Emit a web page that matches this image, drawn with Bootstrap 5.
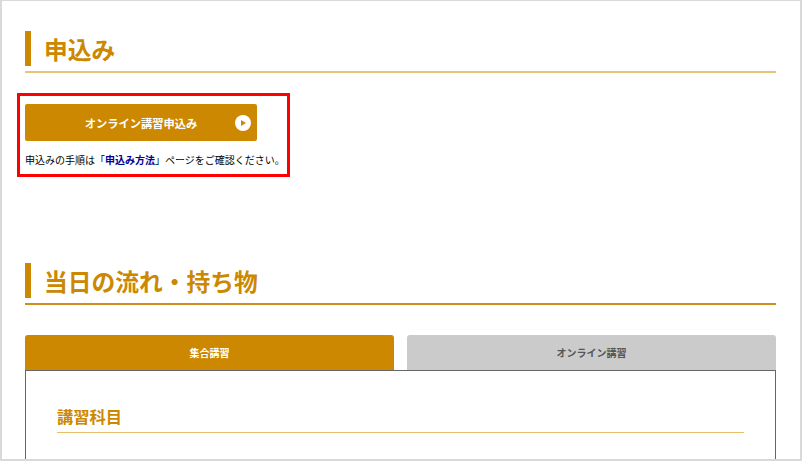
<!DOCTYPE html>
<html lang="ja">
<head>
  <meta charset="UTF-8">
  <title>申込み</title>
  <link rel="stylesheet" href="https://cdn.jsdelivr.net/npm/bootstrap@5.3.0/dist/css/bootstrap.min.css">
  <style>
    html, body { height: 462px; overflow: hidden; background: #fff; }
    body { font-family: "Liberation Sans", "Noto Sans CJK JP", sans-serif; color: #000; }
    .page-frame { height: 461px; overflow: hidden; border: solid #d9d9d9; border-width: 1px 2px 2px 2px; padding: 30px 24px 0 23px; }
    .sec-title { border-bottom: 2px solid #e6c47e; padding-bottom: 5px; margin: 0; }
    .sec-title span { display: block; border-left: 6px solid #cc8800; padding-left: 13px; height: 35px; line-height: 39px; font-size: 23.75px; font-weight: 700; color: #cc8800; }
    .sec-title.dark { border-bottom-color: #cc8f1c; }
    .apply-box { width: 273px; height: 84px; margin: 20px 0 86px -8px; border: 3px solid #f00; padding: 8px 5px 0; }
    .apply-btn { height: 37px; width: 232px; padding-top: 3px; background: #cc8800; color: #fff; font-size: 11.25px; font-weight: 700; border-radius: 2px; position: relative; }
    .apply-btn svg { position: absolute; right: 6px; top: 11px; }
    .apply-note { font-size: 10px; line-height: 14px; margin: 13px 0 0; white-space: nowrap; }
    .apply-note a { color: #000099; text-decoration: none; font-weight: 700; }
    .tab-row { margin-top: 30px; gap: 13px; }
    .tab-item { flex: 1 1 0; height: 35px; padding-top: 1px; font-size: 10px; font-weight: 700; border-radius: 3px 3px 0 0; }
    .tab-on { background: #cc8800; color: #fff; }
    .tab-off { background: #cbcbcb; color: #555; }
    .tab-body { border: 1px solid #666; border-bottom: 0; padding: 36px 31px 0; height: 120px; }
    .sub-title { font-size: 16.25px; font-weight: 700; color: #cc8800; border-bottom: 1px solid #e8bf6a; margin: 0; padding-bottom: 5px; line-height: 20px; }
  </style>
</head>
<body>
<div class="page-frame">
  <h2 class="sec-title"><span>申込み</span></h2>

  <div class="apply-box">
    <a href="#" class="apply-btn d-flex align-items-center justify-content-center text-decoration-none">
      オンライン講習申込み
      <svg width="16" height="16" viewBox="0 0 16 16"><circle cx="8" cy="8" r="8" fill="#fff"/><path d="M6 5 11 8 6 11Z" fill="#cc8800"/></svg>
    </a>
    <p class="apply-note">申込みの手順は「<a href="#">申込み方法</a>」ページをご確認ください。</p>
  </div>

  <h2 class="sec-title dark"><span>当日の流れ・持ち物</span></h2>

  <div class="tab-row d-flex">
    <div class="tab-item tab-on d-flex align-items-center justify-content-center">集合講習</div>
    <div class="tab-item tab-off d-flex align-items-center justify-content-center">オンライン講習</div>
  </div>
  <div class="tab-body">
    <h3 class="sub-title">講習科目</h3>
  </div>
</div>
<script src="https://cdn.jsdelivr.net/npm/bootstrap@5.3.0/dist/js/bootstrap.bundle.min.js"></script>
</body>
</html>
